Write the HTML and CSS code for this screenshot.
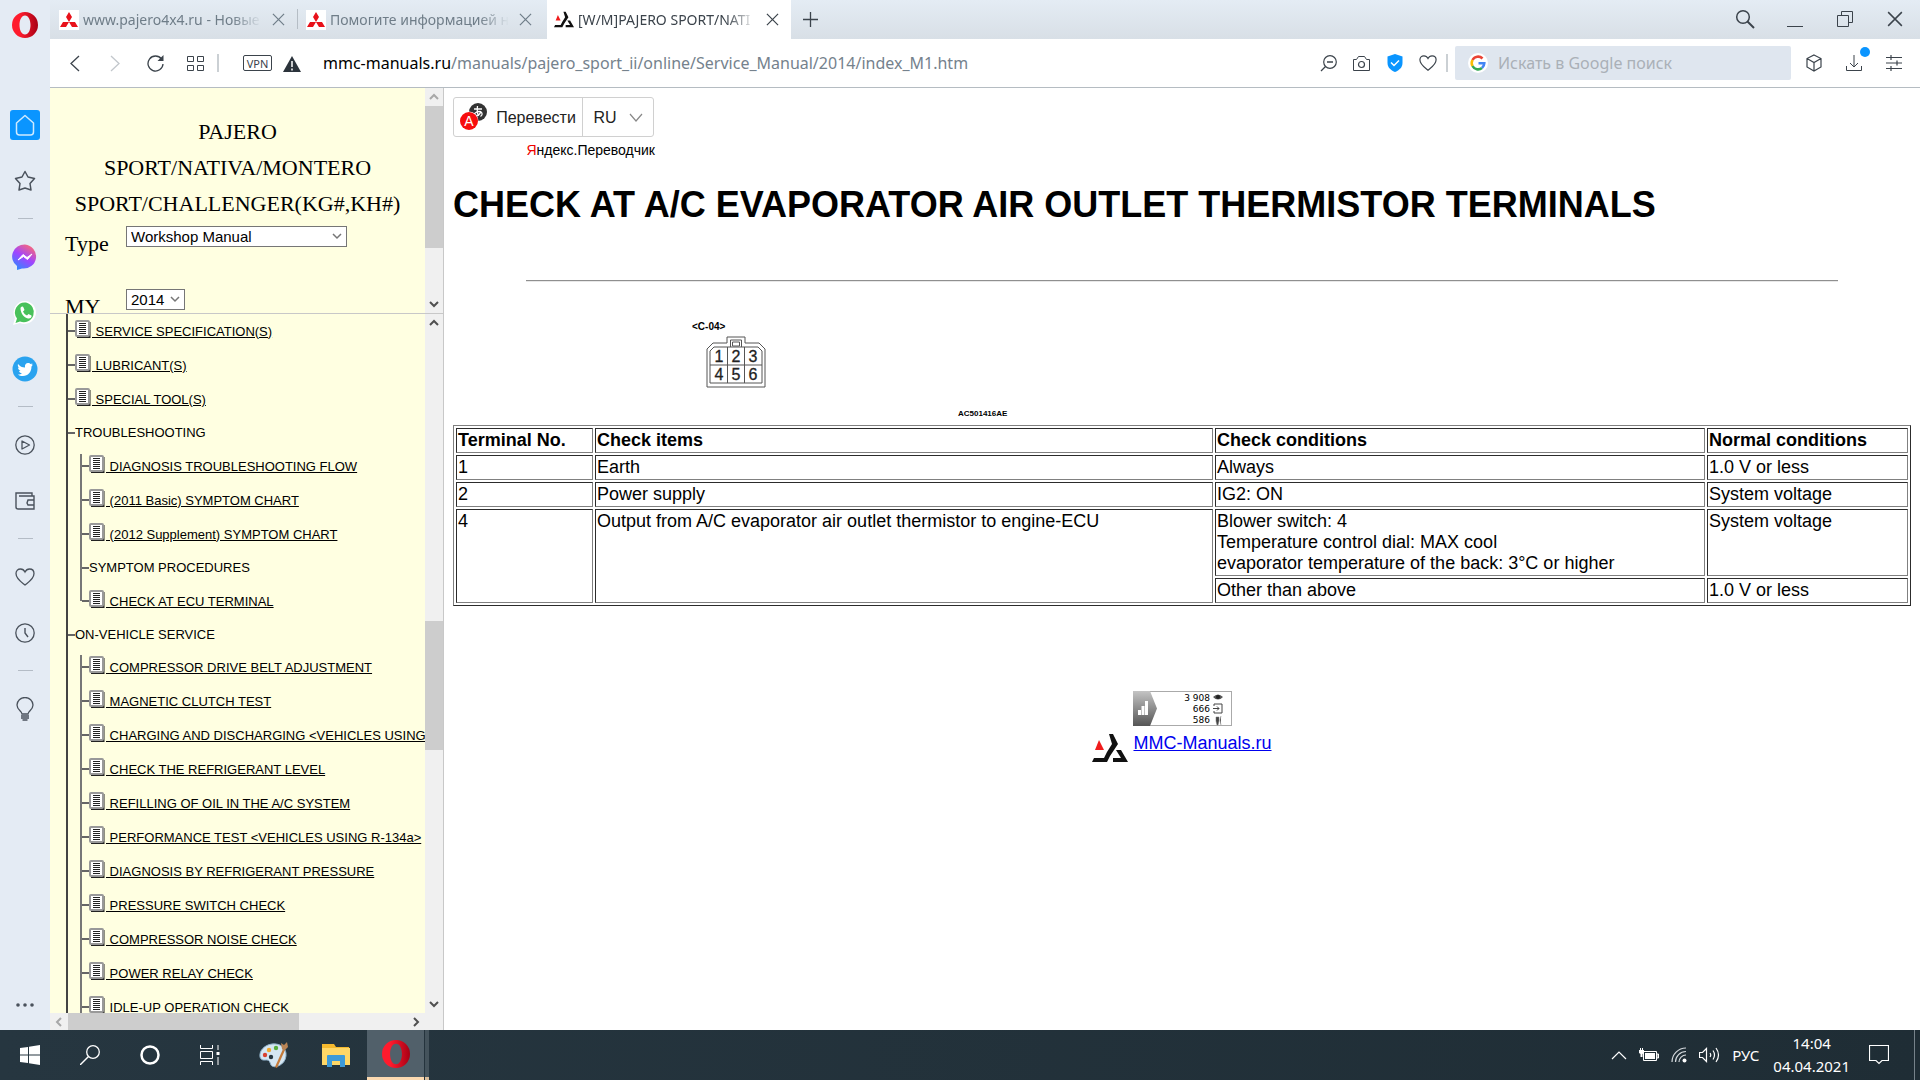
FILE: index.html
```html
<!DOCTYPE html>
<html lang="ru">
<head>
  <meta charset="UTF-8">
  <meta name="viewport" content="width=device-width, initial-scale=1.0">
  <title>[W/M]PAJERO SPORT/NATIVA/MONTERO SPORT/CHALLENGER</title>
  <link rel="stylesheet" href="styles.css">
</head>
<body>

<!-- shared icons -->
<svg class="defs" width="0" height="0" aria-hidden="true">
  <symbol id="i-doc" viewBox="0 0 16 18">
    <path d="M14.500 2v15H2" fill="none" stroke="#222" stroke-width="2"/>
    <rect x="1" y="1" width="13" height="15" rx="1" fill="#fff" stroke="#999" stroke-width="2"/>
    <path d="M4 3.500h7M4 5.500h7M4 7.500h7M4 9.500h7M4 11.500h7M4 13.500h7" stroke="#222"/>
  </symbol>
  <symbol id="i-mitsu" viewBox="0 0 20 20">
    <rect width="20" height="20" fill="#fff"/>
    <path d="M10 2l3 5-3 5-3-5zM10 12l-3 5H1l3-5zM10 12h6l3 5h-6z" fill="#e8111a"/>
  </symbol>
  <symbol id="i-mmc" viewBox="0 0 36 30">
    <path d="M7 7l5 10H3z" fill="#f01c1c"/>
    <path d="M17 1h4l5 10-8 12-3 6H0l2-4h10l3-6 5-8z" fill="#111"/>
    <path d="M24 17h5l7 12H21v-4h8z" fill="#111"/>
  </symbol>
  <symbol id="i-x" viewBox="0 0 14 14"><path d="M1 1l12 12M13 1L1 13" fill="none" stroke="currentColor" stroke-width="1.300"/></symbol>
  <symbol id="i-heart" viewBox="0 0 20 20"><path d="M10 18C7 15.500 1 12 1 6.500 1 3.500 3 2 5.500 2 7.500 2 9 3 10 5c1-2 2.500-3 4.500-3C17 2 19 3.500 19 6.500 19 12 13 15.500 10 18z" fill="none" stroke="currentColor" stroke-width="1.300"/></symbol>
  <symbol id="i-opera" viewBox="0 0 26 26">
    <linearGradient id="g-op" x1="0" x2="1"><stop offset=".3" stop-color="#ff1b2d"/><stop offset="1" stop-color="#a70014"/></linearGradient>
    <path fill="url(#g-op)" fill-rule="evenodd" d="M13 0a13 13 0 1 0 0 26 13 13 0 1 0 0-26zM13 3.500c3.500 0 5.500 4.500 5.500 9.500s-2 9.500-5.500 9.500S7.500 18 7.500 13 9.500 3.500 13 3.500z"/>
  </symbol>
  <symbol id="i-up" viewBox="0 0 10 8"><path d="M1 6l4-4 4 4" fill="none" stroke="currentColor" stroke-width="2"/></symbol>
  <symbol id="i-down" viewBox="0 0 10 8"><path d="M1 2l4 4 4-4" fill="none" stroke="currentColor" stroke-width="2"/></symbol>
</svg>

<div class="browser">
  <nav class="sidebar" aria-label="Боковая панель">
    <button class="side-btn opera" aria-label="Opera"><svg width="26" height="26"><use href="#i-opera"/></svg></button>
    <div class="side-group">
      <button class="side-btn home" aria-label="Домой"><svg width="20" height="22" viewBox="0 0 20 22"><path d="M10 1.500L1.500 9v9q0 3 3 3h11q3 0 3-3V9z" fill="none" stroke="#cfeaff" stroke-width="1.500" stroke-linejoin="round"/></svg></button>
      <button class="side-btn" aria-label="Закладки"><svg width="22" height="22" viewBox="0 0 22 22"><path d="M11 1.500l3 5.500 6.500 1.500-4.500 5 1 6.500-6-2-6 2 1-6.500-4.500-5L8 7z" fill="none" stroke="currentColor" stroke-width="1.500" stroke-linejoin="round"/></svg></button>
    </div>
    <hr>
    <div class="side-group">
      <button class="side-btn" aria-label="Messenger"><svg width="26" height="26" viewBox="0 0 26 26">
        <linearGradient id="g-ms" x1=".2" y1="1" x2=".8" y2="0"><stop offset="0" stop-color="#2a8cff"/><stop offset=".5" stop-color="#a044ff"/><stop offset="1" stop-color="#ff6b70"/></linearGradient>
        <path d="M13 .5a12.500 12 0 1 1-3 24L5 26v-4A12.500 12 0 0 1 13 .5z" fill="url(#g-ms)"/><path d="M6 16l5-5.500 4 3 5-3.500-4.500 5.500-4-3z" fill="#fff" stroke="#fff"/></svg></button>
      <button class="side-btn" aria-label="WhatsApp"><svg width="26" height="26" viewBox="0 0 26 26"><path d="M14 1a11.500 11.500 0 1 1-6 22l-7 2 2-7A11.500 11.500 0 0 1 14 1z" fill="#fff"/><path d="M14 2.500a10 10 0 1 1-6 19l-4.500 1.500L5 18.500A10 10 0 0 1 14 2.500z" fill="#48c15b"/><path d="M8.500 8c1-2 2.500-2 3-.5l1 2.500-1.500 1.500c1 2 2 3 4 4l1.500-1.500 3 1.500c.5 2-1.500 3.500-3.500 3-4-1-7.500-5-7.500-10.500z" fill="#fff"/></svg></button>
      <button class="side-btn" aria-label="Twitter"><svg width="26" height="26" viewBox="0 0 26 26"><circle cx="13" cy="13" r="12.500" fill="#2aa3ef"/><path d="M6 8c2 2.500 4 3.500 7 3.500-.5-3 1-4.500 3-4.500 1.500 0 2 .5 2.500 1l2-.5-1 1.500 1.500-.5-1.500 2C19.500 16 16 20 11 20c-2 0-4-.5-5-1.500 2 0 3-.5 4-1-1.500-.5-2.500-1-3-2.500h1.500C7 14 6 13 6 11.500l1.500.5C6 11 5.500 9.500 6 8z" fill="#fff"/></svg></button>
    </div>
    <hr>
    <div class="side-group">
      <button class="side-btn" aria-label="Плеер"><svg width="20" height="20" viewBox="0 0 20 20"><circle cx="10" cy="10" r="9.200" fill="none" stroke="currentColor" stroke-width="1.300"/><path d="M7 6v8l7.500-4z" fill="none" stroke="currentColor" stroke-width="1.300" stroke-linejoin="round"/></svg></button>
      <button class="side-btn" aria-label="Кошелёк"><svg width="20" height="18" viewBox="0 0 20 18"><path d="M4 4h13M17 3.500V1H1v14q0 2 2 2h16V4h-3M19 8h-6l-1 3 1 2h6" fill="none" stroke="currentColor" stroke-width="1.400"/></svg></button>
    </div>
    <hr>
    <div class="side-group">
      <button class="side-btn" aria-label="Избранное"><svg width="22" height="20"><use href="#i-heart"/></svg></button>
      <button class="side-btn" aria-label="История"><svg width="20" height="20" viewBox="0 0 20 20"><circle cx="10" cy="10" r="9.200" fill="none" stroke="currentColor" stroke-width="1.300"/><path d="M10 5v5l3 4" fill="none" stroke="currentColor" stroke-width="1.400"/></svg></button>
    </div>
    <hr>
    <div class="side-group">
      <button class="side-btn" aria-label="Советы"><svg width="18" height="24" viewBox="0 0 18 24"><path d="M6 17c0-3-5-4-5-9a8 7.500 0 0 1 16 0c0 5-5 6-5 9z" fill="none" stroke="currentColor" stroke-width="1.300"/><path d="M5 19h8M5 21h8M6.500 23h5" stroke="currentColor" stroke-width="1.300"/></svg></button>
    </div>
    <button class="side-btn more" aria-label="Ещё"><svg width="18" height="4" viewBox="0 0 18 4"><circle cx="2" cy="2" r="1.800"/><circle cx="9" cy="2" r="1.800"/><circle cx="16" cy="2" r="1.800"/></svg></button>
  </nav>

  <div class="main">
    <header class="tabbar">
      <div class="tab">
        <svg width="20" height="20"><use href="#i-mitsu"/></svg>
        <span class="tab-title">www.pajero4x4.ru - Новые</span>
        <button aria-label="Закрыть вкладку"><svg width="13" height="13"><use href="#i-x"/></svg></button>
      </div>
      <div class="tab second">
        <svg width="20" height="20"><use href="#i-mitsu"/></svg>
        <span class="tab-title">Помогите информацией н</span>
        <button aria-label="Закрыть вкладку"><svg width="13" height="13"><use href="#i-x"/></svg></button>
      </div>
      <div class="tab active">
        <svg width="20" height="17"><use href="#i-mmc"/></svg>
        <span class="tab-title">[W/M]PAJERO SPORT/NATI</span>
        <button aria-label="Закрыть вкладку"><svg width="13" height="13"><use href="#i-x"/></svg></button>
      </div>
      <button class="new-tab" aria-label="Новая вкладка"><svg width="15" height="15" viewBox="0 0 15 15"><path d="M7.500 0v15M0 7.500h15" stroke="currentColor" stroke-width="1.300"/></svg></button>
      <div class="win-controls">
        <button aria-label="Поиск вкладок"><svg width="20" height="20" viewBox="0 0 20 20"><circle cx="8" cy="8" r="6.300" fill="none" stroke="currentColor" stroke-width="1.500"/><path d="M12.500 12.500L19 19" stroke="currentColor" stroke-width="2"/></svg></button>
        <button aria-label="Свернуть"><svg width="16" height="16" viewBox="0 0 16 16"><path d="M0 15.500h16" stroke="currentColor"/></svg></button>
        <button aria-label="Окно"><svg width="16" height="16" viewBox="0 0 16 16"><path d="M.5 4.500h11v11H.5zM4.500 4V.5h11v11H12" fill="none" stroke="currentColor"/></svg></button>
        <button aria-label="Закрыть"><svg width="16" height="16"><use href="#i-x"/></svg></button>
      </div>
    </header>

    <div class="toolbar">
      <div class="nav-buttons">
        <button aria-label="Назад"><svg width="10" height="17" viewBox="0 0 10 17"><path d="M9 1L1 8.500 9 16" fill="none" stroke="currentColor" stroke-width="1.300"/></svg></button>
        <button aria-label="Вперёд" disabled><svg width="10" height="17" viewBox="0 0 10 17"><path d="M1 1l8 7.500L1 16" fill="none" stroke="currentColor" stroke-width="1.300"/></svg></button>
        <button aria-label="Обновить"><svg width="17" height="17" viewBox="0 0 17 17"><path d="M14.500 4A7.500 7.500 0 1 0 16 9" fill="none" stroke="currentColor" stroke-width="1.300"/><path d="M16.500 0v6h-6z" fill="currentColor"/></svg></button>
        <button aria-label="Экспресс-панель"><svg width="17" height="15" viewBox="0 0 17 15"><path d="M.5.5h6v5h-6zM10.500.5h6v5h-6zM.5 9.500h6v5h-6zM10.500 9.500h6v5h-6z" fill="none" stroke="currentColor"/></svg></button>
      </div>
      <span class="divider"></span>
      <button class="vpn">VPN</button>
      <svg class="warn" width="18" height="16" viewBox="0 0 18 16"><path d="M9 0l9 16H0z" fill="#2b333b"/><path d="M9 5v6M9 12.500v2" stroke="#fff" stroke-width="1.500"/></svg>
      <div class="url"><b>mmc-manuals.ru</b>/manuals/pajero_sport_ii/online/Service_Manual/2014/index_M1.htm</div>
      <div class="page-actions">
        <button aria-label="Масштаб"><svg width="17" height="17" viewBox="0 0 17 17"><circle cx="10" cy="7" r="6.300" fill="none" stroke="currentColor" stroke-width="1.200"/><path d="M7 7h6M5.500 11.500L1 16" stroke="currentColor" stroke-width="1.300"/></svg></button>
        <button aria-label="Снимок"><svg width="17" height="15" viewBox="0 0 17 15"><path d="M.5 3.500h3l2-3h6l2 3h3v11H.5z" fill="none" stroke="currentColor"/><circle cx="8.500" cy="8.500" r="3" fill="none" stroke="currentColor" stroke-width="1.200"/></svg></button>
        <button aria-label="Защита"><svg width="16" height="18" viewBox="0 0 16 18"><path d="M8 0l7.500 2.500V9c0 5-4 7.500-7.500 9C4.500 16.500.5 14 .5 9V2.500z" fill="#0a95ff"/><path d="M4 8.500l3 3 5-5" fill="none" stroke="#fff" stroke-width="1.500"/></svg></button>
        <button aria-label="В избранное"><svg width="18" height="18"><use href="#i-heart"/></svg></button>
      </div>
      <span class="divider"></span>
      <label class="search">
        <svg width="20" height="20" viewBox="0 0 20 20"><circle cx="10" cy="10" r="10" fill="#fff"/><g fill="none" stroke-width="2.600"><path d="M14.500 5.500A6.300 6.300 0 0 0 4.500 7" stroke="#ea4335"/><path d="M4.500 7a6.300 6.300 0 0 0 0 6" stroke="#fbbc05"/><path d="M4.500 13a6.300 6.300 0 0 0 9.500 2" stroke="#34a853"/><path d="M14 15a6.300 6.300 0 0 0 2.300-4.700H10.500" stroke="#4285f4"/></g></svg>
        <input type="text" placeholder="Искать в Google поиск" aria-label="Искать в Google поиск">
      </label>
      <div class="app-actions">
        <button aria-label="Крипто"><svg width="16" height="18" viewBox="0 0 16 18"><path d="M8 1l7 3.500v8.500L8 17l-7-4V4.500zM1 4.500L8 8.500l7-4M8 8.500V17" fill="none" stroke="currentColor" stroke-width="1.200"/></svg></button>
        <button class="download" aria-label="Загрузки"><svg width="16" height="16" viewBox="0 0 16 16"><path d="M.5 11v4.500h15V11M8 0v12M4 8l4 4 4-4" fill="none" stroke="currentColor"/></svg></button>
        <button aria-label="Настройки"><svg width="16" height="16" viewBox="0 0 16 16"><path d="M0 2.500h16M0 8h16M0 13.500h16M5 0v5M11 5.500v5M5 11v5" stroke="currentColor" stroke-width="1.200"/></svg></button>
      </div>
    </div>

    <div class="frames">
      <div class="left">
        <div class="frame frame-top">
          <div class="frame-body">
            <p class="model">PAJERO SPORT/NATIVA/MONTERO SPORT/CHALLENGER(KG#,KH#)</p>
            <div class="field">
              <label for="type">Type</label>
              <select id="type" class="type-select"><option>Workshop Manual</option></select>
            </div>
            <div class="field">
              <label for="my">MY</label>
              <select id="my" class="year-select"><option>2014</option></select>
            </div>
          </div>
          <div class="vbar top-bar" aria-hidden="true">
            <svg class="dim" width="10" height="8"><use href="#i-up"/></svg>
            <span class="thumb"></span>
            <svg class="end" width="10" height="8"><use href="#i-down"/></svg>
          </div>
        </div>

        <div class="frame frame-tree">
          <div class="frame-body">
            <ul class="tree">
              <li><a href="#"><svg><use href="#i-doc"/></svg>&nbsp;SERVICE SPECIFICATION(S)</a></li>
              <li><a href="#"><svg><use href="#i-doc"/></svg>&nbsp;LUBRICANT(S)</a></li>
              <li><a href="#"><svg><use href="#i-doc"/></svg>&nbsp;SPECIAL TOOL(S)</a></li>
              <li>
                <span>TROUBLESHOOTING</span>
                <ul>
                  <li><a href="#"><svg><use href="#i-doc"/></svg>&nbsp;DIAGNOSIS TROUBLESHOOTING FLOW</a></li>
                  <li><a href="#"><svg><use href="#i-doc"/></svg>&nbsp;(2011 Basic) SYMPTOM CHART</a></li>
                  <li><a href="#"><svg><use href="#i-doc"/></svg>&nbsp;(2012 Supplement) SYMPTOM CHART</a></li>
                  <li><span>SYMPTOM PROCEDURES</span></li>
                  <li><a href="#"><svg><use href="#i-doc"/></svg>&nbsp;CHECK AT ECU TERMINAL</a></li>
                </ul>
              </li>
              <li>
                <span>ON-VEHICLE SERVICE</span>
                <ul class="open">
                  <li><a href="#"><svg><use href="#i-doc"/></svg>&nbsp;COMPRESSOR DRIVE BELT ADJUSTMENT</a></li>
                  <li><a href="#"><svg><use href="#i-doc"/></svg>&nbsp;MAGNETIC CLUTCH TEST</a></li>
                  <li><a href="#"><svg><use href="#i-doc"/></svg>&nbsp;CHARGING AND DISCHARGING &lt;VEHICLES USING R-134a&gt;</a></li>
                  <li><a href="#"><svg><use href="#i-doc"/></svg>&nbsp;CHECK THE REFRIGERANT LEVEL</a></li>
                  <li><a href="#"><svg><use href="#i-doc"/></svg>&nbsp;REFILLING OF OIL IN THE A/C SYSTEM</a></li>
                  <li><a href="#"><svg><use href="#i-doc"/></svg>&nbsp;PERFORMANCE TEST &lt;VEHICLES USING R-134a&gt;</a></li>
                  <li><a href="#"><svg><use href="#i-doc"/></svg>&nbsp;DIAGNOSIS BY REFRIGERANT PRESSURE</a></li>
                  <li><a href="#"><svg><use href="#i-doc"/></svg>&nbsp;PRESSURE SWITCH CHECK</a></li>
                  <li><a href="#"><svg><use href="#i-doc"/></svg>&nbsp;COMPRESSOR NOISE CHECK</a></li>
                  <li><a href="#"><svg><use href="#i-doc"/></svg>&nbsp;POWER RELAY CHECK</a></li>
                  <li><a href="#"><svg><use href="#i-doc"/></svg>&nbsp;IDLE-UP OPERATION CHECK</a></li>
                </ul>
              </li>
            </ul>
          </div>
          <div class="vbar tree-bar" aria-hidden="true">
            <svg width="10" height="8"><use href="#i-up"/></svg>
            <span class="thumb"></span>
            <svg class="end" width="10" height="8"><use href="#i-down"/></svg>
          </div>
          <div class="hbar" aria-hidden="true">
            <svg class="dim" width="8" height="10" viewBox="0 0 8 10"><path d="M6 1L2 5l4 4" fill="none" stroke="currentColor" stroke-width="2"/></svg>
            <span class="thumb"></span>
            <svg class="end" width="8" height="10" viewBox="0 0 8 10"><path d="M2 1l4 4-4 4" fill="none" stroke="currentColor" stroke-width="2"/></svg>
          </div>
        </div>
      </div>

      <main class="content">
        <div class="translate">
          <div class="translate-box">
            <button class="translate-btn">
              <svg width="28" height="30" viewBox="0 0 28 30"><circle cx="18" cy="10" r="9" fill="#333"/><path d="M14 7h8M17.500 4c-.5 4 0 8 1 10M21 9c-1 4-4 5.500-6 4.500s1-4 4-4 4.500 3 1.500 5" fill="none" stroke="#fff" stroke-width="1.300"/><circle cx="9" cy="19" r="9.500" fill="#fff"/><circle cx="9" cy="19" r="9" fill="#f70d0d"/><text x="9" y="24" text-anchor="middle" class="letter">A</text></svg>
              Перевести
            </button>
            <button class="lang-btn">RU <svg width="14" height="9" viewBox="0 0 14 9"><path d="M1 1l6 7 6-7" fill="none" stroke="#888" stroke-width="1.200"/></svg></button>
          </div>
          <div class="yandex"><span>Я</span>ндекс.Переводчик</div>
        </div>

        <h1>CHECK AT A/C EVAPORATOR AIR OUTLET THERMISTOR TERMINALS</h1>
        <hr>

        <!-- connector C-04, terminal side -->
        <svg class="connector" width="320" height="100" viewBox="0 0 320 100">
          <text x="1" y="10" class="cap">&lt;C-04&gt;</text>
          <g fill="none" stroke="#555">
            <path d="M16 67V29l6-6h14v-6h18v6h14l6 6v38z"/>
            <path d="M19 63V31l4-4h44l4 4v32zM19 45h52M36.500 27v36M53.500 27v36"/>
            <path d="M39.500 27v-7h11v7M41.500 22h7v4h-7z"/>
          </g>
          <g class="pins" text-anchor="middle">
            <text x="28" y="42">1</text><text x="45" y="42">2</text><text x="62" y="42">3</text>
            <text x="28" y="60">4</text><text x="45" y="60">5</text><text x="62" y="60">6</text>
          </g>
          <text x="267" y="96" class="num">AC501416AE</text>
        </svg>

        <table class="terminals">
          <colgroup><col class="c-no"><col><col class="c-cond"><col class="c-norm"></colgroup>
          <tr><th>Terminal No.</th><th>Check items</th><th>Check conditions</th><th>Normal conditions</th></tr>
          <tr><td>1</td><td>Earth</td><td>Always</td><td>1.0 V or less</td></tr>
          <tr><td>2</td><td>Power supply</td><td>IG2: ON</td><td>System voltage</td></tr>
          <tr>
            <td rowspan="2">4</td>
            <td rowspan="2">Output from A/C evaporator air outlet thermistor to engine-ECU</td>
            <td>Blower switch: 4<br>Temperature control dial: MAX cool<br>evaporator temperature of the back: 3°C or higher</td>
            <td>System voltage</td>
          </tr>
          <tr><td>Other than above</td><td>1.0 V or less</td></tr>
        </table>

        <footer class="site-footer">
          <svg class="counter" width="99" height="35" viewBox="0 0 99 35">
            <linearGradient id="g-cnt" x1="0" y1="0" x2="0" y2="1"><stop offset="0" stop-color="#c4c4c4"/><stop offset="1" stop-color="#555"/></linearGradient>
            <rect x=".5" y=".5" width="98" height="34" fill="#fff" stroke="#aaa"/>
            <path d="M0 0h17l7 17.500L17 35H0z" fill="url(#g-cnt)"/>
            <path d="M5 19h3v5H5zM8.500 15h3v9h-3zM12 10h3v14h-3z" fill="#fff"/>
            <g class="digits" text-anchor="end"><text x="77" y="10">3 908</text><text x="77" y="21">666</text><text x="77" y="32">586</text></g>
            <path d="M80 6q5-5 10 0-5 5-10 0z" fill="#555"/><circle cx="85" cy="6" r="2" fill="#222"/>
            <path d="M81 15v-2h8v9h-8v-2M80 17.500h6M84 15.500l2 2-2 2" fill="none" stroke="#444"/>
            <path d="M83 26h3v4l-1 4h-1l-1-4zM88 25l-1 4 1 5" fill="#444" stroke="#777" stroke-width=".5"/>
          </svg>
          <svg class="mmc" width="36" height="30"><use href="#i-mmc"/></svg>
          <a href="#">MMC-Manuals.ru</a>
        </footer>
      </main>
    </div>
  </div>
</div>

<div class="taskbar">
  <button aria-label="Пуск"><svg width="20" height="20" viewBox="0 0 20 20"><path d="M0 3l8-1v7.500H0zM9 1.800L20 0v9.500H9zM0 10.500h8V18l-8-1zM9 10.500h11V20L9 18.200z" fill="#fff"/></svg></button>
  <button aria-label="Поиск"><svg width="20" height="20" viewBox="0 0 20 20"><circle cx="13" cy="7" r="6.300" fill="none" stroke="#fff" stroke-width="1.300"/><path d="M8.500 11.500L0 20" stroke="#fff" stroke-width="1.400"/></svg></button>
  <button aria-label="Кортана"><svg width="20" height="20" viewBox="0 0 20 20"><circle cx="10" cy="10" r="8.500" fill="none" stroke="#fff" stroke-width="2.500"/></svg></button>
  <button aria-label="Представление задач"><svg width="20" height="20" viewBox="0 0 20 20"><path d="M.5 0v3.500h12V0M.5 6.500h12v7H.5zM.5 20v-3.500h12V20M18 0v5M18 12v8" fill="none" stroke="#fff"/><path d="M16.500 7h3v3h-3z" fill="#fff"/></svg></button>
  <div class="pinned">
    <button aria-label="Paint"><svg width="30" height="28" viewBox="0 0 30 28"><path d="M13 3C5 4 0 10 1 16c1 4 5 3 7 3s3 2 4 5c2 4 14 1 15-9C28 7 21 2 13 3z" fill="#d5e6f2" stroke="#8fb0c8"/><circle cx="6" cy="14" r="2.200" fill="#d9412f"/><circle cx="10" cy="9" r="2.200" fill="#f0a830"/><circle cx="17" cy="7" r="2.200" fill="#58ae3c"/><circle cx="12" cy="16" r="2.200" fill="#263640"/><path d="M16 26l8-18 2 1-8 18z" fill="#c47a3a"/><path d="M23 8l-1-6 3 2 3-3 1 5-4 4z" fill="#b98455"/></svg></button>
    <button aria-label="Проводник"><svg width="28" height="24" viewBox="0 0 28 24"><path d="M0 1h12l2 3h13v18H0z" fill="#f5b92e"/><path d="M0 5h28v17H0z" fill="#ffd766"/><path d="M5 24V13q0-1 1-1h16q1 0 1 1v11h-5v-6h-8v6z" fill="#3d9ad8"/></svg></button>
    <button class="current" aria-label="Opera"><svg width="28" height="28"><use href="#i-opera"/></svg></button>
    <span class="stack"></span>
  </div>
  <div class="tray">
    <button aria-label="Скрытые значки"><svg width="16" height="9" viewBox="0 0 16 9"><path d="M1 8l7-7 7 7" fill="none" stroke="#fff" stroke-width="1.200"/></svg></button>
    <button aria-label="Батарея"><svg width="20" height="14" viewBox="0 0 20 14"><path d="M4.500 3.500h13v9h-13zM18 6v4h1.500V6z" fill="none" stroke="#fff"/><path d="M6 5h10v6H6zM0 2h5v3L3.500 6v3h-2V6L0 5zM1 0h1v2H1zM3 0h1v2H3z" fill="#fff"/></svg></button>
    <button aria-label="Сеть"><svg width="16" height="16" viewBox="0 0 16 16"><g fill="none" stroke="#d5dade" stroke-width="1.200"><path d="M1 15A14 14 0 0 1 15 1M4.500 15A10.500 10.500 0 0 1 15 4.500M8 15a7 7 0 0 1 7-7"/></g><circle cx="13.500" cy="13.500" r="2" fill="#fff"/></svg></button>
    <button aria-label="Громкость"><svg width="21" height="18" viewBox="0 0 21 18"><path d="M.5 6.500h3l4-4v13l-4-4h-3zM11 7q1.500 2 0 4M14 4.500q3 4.500 0 9M17 2q5 7 0 14" fill="none" stroke="#fff" stroke-width="1.200"/></svg></button>
    <span class="input-lang">РУС</span>
    <div class="clock"><span>14:04</span><span>04.04.2021</span></div>
    <button aria-label="Уведомления"><svg width="20" height="20" viewBox="0 0 20 20"><path d="M.5.500h19v15H13l-3 3-3-3H.5z" fill="none" stroke="#fff" stroke-width="1.200"/></svg></button>
  </div>
</div>

</body>
</html>
```

FILE: styles.css
```css
* {
  box-sizing: border-box;
}

body {
  margin: 0;
  height: 100vh;
  display: flex;
  flex-direction: column;
  font-family: "Liberation Sans", Arial, sans-serif;
  color: #000;
  background: #fff;
}

button {
  margin: 0;
  padding: 0;
  border: none;
  background: none;
  color: inherit;
  font: inherit;
  display: flex;
  align-items: center;
  justify-content: center;
}

svg {
  flex: none;
}

.defs {
  position: absolute;
}

.browser {
  flex: 1;
  min-height: 0;
  display: flex;
}

/* sidebar */
.sidebar {
  flex: none;
  width: 50px;
  padding: 10px 0;
  display: flex;
  flex-direction: column;
  align-items: center;
  background: #e4ebf4;
  color: #4a525c;
}

.side-btn {
  width: 30px;
  height: 30px;
}

.opera {
  margin-bottom: 70px;
}

.home {
  background: #0a95ff;
  border-radius: 3px;
}

.side-group {
  display: flex;
  flex-direction: column;
  gap: 26px;
}

.sidebar hr {
  width: 15px;
  height: 1px;
  margin: 22px 0 23px;
  border: none;
  background: #b4bcc6;
}

.more {
  margin-top: auto;
  fill: currentColor;
}

.main {
  flex: 1;
  min-width: 0;
  display: flex;
  flex-direction: column;
}

/* tabs */
.tabbar {
  flex: none;
  height: 39px;
  display: flex;
  font: 14px "Noto Sans", sans-serif;
  color: #6f7d88;
  background: linear-gradient(#e4ecf4, #d8dfe6);
}

.tab {
  width: 247px;
  padding: 0 12px 0 9px;
  display: flex;
  align-items: center;
  gap: 4px;
}

.tab.second {
  background: linear-gradient(#b5bdc5, #b5bdc5) 0 9px / 1px 20px no-repeat;
}

.tab.active {
  width: 244px;
  margin-left: 3px;
  padding-left: 7px;
  color: #3b434b;
  background: #fff;
}

.tab-title {
  flex: 1;
  overflow: hidden;
  white-space: nowrap;
  margin-right: 6px;
  -webkit-mask-image: linear-gradient(to left, transparent, #000 30px);
  mask-image: linear-gradient(to left, transparent, #000 30px);
}

.new-tab {
  width: 39px;
  height: 38px;
  color: #3b434b;
}

.win-controls {
  margin-left: auto;
  display: flex;
  color: #3b434b;
}

.win-controls button {
  width: 50px;
  height: 38px;
}

/* toolbar */
.toolbar {
  flex: none;
  height: 49px;
  padding: 0 6px 0 5px;
  display: flex;
  align-items: center;
  color: #3b434b;
  background: #fff;
  border-bottom: 1px solid #b5bcc2;
}

.nav-buttons button {
  width: 40px;
  height: 40px;
}

.nav-buttons,
.page-actions,
.app-actions {
  display: flex;
}

.nav-buttons button:disabled {
  color: #c2c7cc;
}

.divider {
  width: 2px;
  height: 18px;
  margin: 0 2px;
  background: #cbd0d4;
}

.vpn {
  margin-left: 22px;
  width: 29px;
  height: 16px;
  border: 1px solid #3b434b;
  border-radius: 2px;
  font: 11px "Noto Sans", sans-serif;
}

.warn {
  margin: 2px 22px 0 11px;
}

.url {
  flex: 1;
  min-width: 0;
  overflow: hidden;
  white-space: nowrap;
  font: 16px "Noto Sans", sans-serif;
  color: #75828d;
}

.url b {
  font-weight: normal;
  color: #000;
}

.page-actions button {
  width: 33px;
  height: 40px;
}

.search {
  margin-left: 5px;
  width: 336px;
  height: 34px;
  padding: 0 13px;
  display: flex;
  align-items: center;
  gap: 10px;
  border-radius: 2px;
  background: #dfe6ef;
}

.search input {
  flex: 1;
  min-width: 0;
  padding: 0;
  border: none;
  background: none;
  font: 16px "Noto Sans", sans-serif;
}

.search input::placeholder {
  color: #aab0b7;
}

.app-actions {
  margin-left: 3px;
}

.app-actions button {
  width: 40px;
  height: 40px;
}

.download {
  position: relative;
}

.download::after {
  content: "";
  position: absolute;
  top: 4px;
  right: 4px;
  width: 10px;
  height: 10px;
  border-radius: 50%;
  background: #0a95ff;
}

/* frames */
.frames {
  flex: 1;
  min-height: 0;
  display: flex;
}

.left {
  flex: none;
  width: 394px;
  display: flex;
  flex-direction: column;
  border-right: 1px solid #c8c8c8;
}

.frame {
  display: grid;
  grid-template-columns: 1fr 18px;
  background: #ffffe1;
}

.frame-top {
  flex: none;
  height: 226px;
  border-bottom: 1px solid #c8c8c8;
}

.frame-tree {
  flex: 1;
  min-height: 0;
  grid-template-rows: minmax(0, 1fr) 17px;
}

.frame-body {
  min-width: 0;
  overflow: hidden;
}

.model {
  margin: 0;
  padding: 26px 12px 0;
  text-align: center;
  font: 22px/36px "Liberation Serif", serif;
}

.field {
  height: 63px;
  padding: 4px 15px 0;
  display: flex;
  align-items: flex-start;
}

.field label {
  width: 61px;
  font: 22px/36px "Liberation Serif", serif;
}

.field select {
  appearance: none;
  height: 21px;
  padding: 0 4px;
  border: 1px solid #767676;
  border-radius: 0;
  font: 15px "Liberation Sans", Arial, sans-serif;
  color: #000;
  background: #fff url("data:image/svg+xml,%3Csvg xmlns='http://www.w3.org/2000/svg' width='10' height='7'%3E%3Cpath d='M1 1l4 4 4-4' fill='none' stroke='%23767676' stroke-width='1.500'/%3E%3C/svg%3E") right 4px center no-repeat;
}

.type-select {
  width: 221px;
}

.year-select {
  width: 59px;
}

/* scroll bars */
.vbar,
.hbar {
  display: flex;
  align-items: center;
  background: #f0f0f0;
  color: #505050;
}

.vbar {
  flex-direction: column;
  padding: 5px 0;
}

.hbar {
  grid-column: 1 / -1;
  padding: 0 23px 0 5px;
}

.dim {
  color: #a8a8a8;
}

.thumb {
  background: #cdcdcd;
}

.vbar .thumb {
  width: 18px;
}

.end {
  margin-top: auto;
}

.top-bar .thumb {
  margin-top: 5px;
  height: 142px;
}

.tree-bar .thumb {
  margin-top: 294px;
  height: 129px;
}

.hbar .thumb {
  margin-left: 5px;
  width: 231px;
  height: 17px;
}

.hbar .end {
  margin: 0 0 0 auto;
}

/* contents tree */
.tree,
.tree ul {
  margin: 0;
  padding: 0;
  list-style: none;
}

.tree {
  margin-left: 16px;
  font-size: 13px;
  white-space: nowrap;
}

.tree li {
  padding-left: 2px;
  background: linear-gradient(#444, #444) 0 0 / 2px 100% no-repeat;
}

.tree ul {
  margin-left: 12px;
}

.tree ul.open {
  margin-top: -1px;
}

.tree ul li {
  background-image: linear-gradient(#777, #777);
}

.tree ul li:first-child {
  background-position: 0 5px;
}

.tree ul li:last-child {
  background-size: 2px 50%;
}

.tree ul.open li:last-child {
  background-size: 2px 100%;
}

.tree a,
.tree span {
  display: flex;
  align-items: center;
  height: 34px;
  color: #000;
}

.tree span {
  height: 33px;
}

.tree a::before,
.tree span::before {
  content: "";
  flex: none;
  width: 7px;
  height: 2px;
  background: #666;
}

.tree svg {
  width: 16px;
  height: 18px;
  margin: 0 1px 4px 0;
}

/* manual page */
.content {
  flex: 1;
  min-width: 0;
  padding: 9px 9px 9px 8px;
  margin-left: 1px;
  overflow: hidden;
  font-size: 18px;
  line-height: 21px;
}

.translate {
  width: 202px;
}

.translate-box {
  width: 201px;
  height: 40px;
  display: flex;
  border: 1px solid #d0d0d0;
  border-radius: 3px;
  font-size: 16px;
  color: #222;
}

.translate-btn {
  width: 129px;
  gap: 8px;
  border-right: 1px solid #d0d0d0;
}

.letter {
  font-size: 14px;
  fill: #fff;
}

.lang-btn {
  flex: 1;
  gap: 12px;
}

.yandex {
  margin-top: 3px;
  text-align: right;
  font-size: 14px;
}

.yandex span {
  color: #e00;
}

h1 {
  margin: 24px 0;
  font-size: 36px;
  line-height: 40px;
}

.content hr {
  width: 90%;
  margin: 55px auto 0;
  border: none;
  border-top: 1px solid #8f8f8f;
  border-bottom: 1px solid #e8e8e8;
}

.connector {
  display: block;
  margin: 38px 0 5px 238px;
}

.cap {
  font-size: 10px;
  font-weight: bold;
}

.pins {
  font-size: 16px;
  fill: #222;
  stroke: #222;
  stroke-width: .3px;
}

.num {
  font-size: 8px;
  font-weight: bold;
}

.terminals {
  width: 100%;
  table-layout: fixed;
  border: 1px outset gray;
  border-spacing: 2px;
}

.terminals th,
.terminals td {
  padding: 1px;
  border: 1px inset gray;
  text-align: left;
  vertical-align: top;
}

.c-no {
  width: 137px;
}

.c-cond {
  width: 490px;
}

.c-norm {
  width: 201px;
}

.site-footer {
  margin-top: 85px;
  display: grid;
  grid-template-columns: 36px auto;
  gap: 7px 5px;
  justify-content: center;
}

.counter {
  grid-column: 2;
}

.digits {
  font: 9px "DejaVu Sans", sans-serif;
}

.site-footer a {
  color: #0000ee;
}

/* taskbar */
.taskbar {
  flex: none;
  height: 50px;
  display: flex;
  color: #fff;
  background: linear-gradient(to right, #263640, #1f2d35);
}

.taskbar button {
  width: 60px;
}

.pinned {
  margin-left: 3px;
  display: flex;
}

.taskbar .pinned button {
  width: 62px;
}

.taskbar .pinned .current {
  width: 57px;
  background: #51606a;
  border-bottom: 3px solid #fbd9b0;
}

.stack {
  width: 4px;
  margin-left: 1px;
  background: #44535c;
  border-bottom: 3px solid #d9bd9b;
}

.tray {
  margin-left: auto;
  padding-right: 20px;
  margin-right: 5px;
  border-right: 1px solid #76828a;
  display: flex;
  align-items: center;
  font: 15px/23px "Noto Sans", sans-serif;
}

.taskbar .tray button {
  width: 30px;
}

.input-lang {
  margin-left: 8px;
}

.clock {
  margin: 0 14px;
  display: flex;
  flex-direction: column;
  align-items: center;
}
```
